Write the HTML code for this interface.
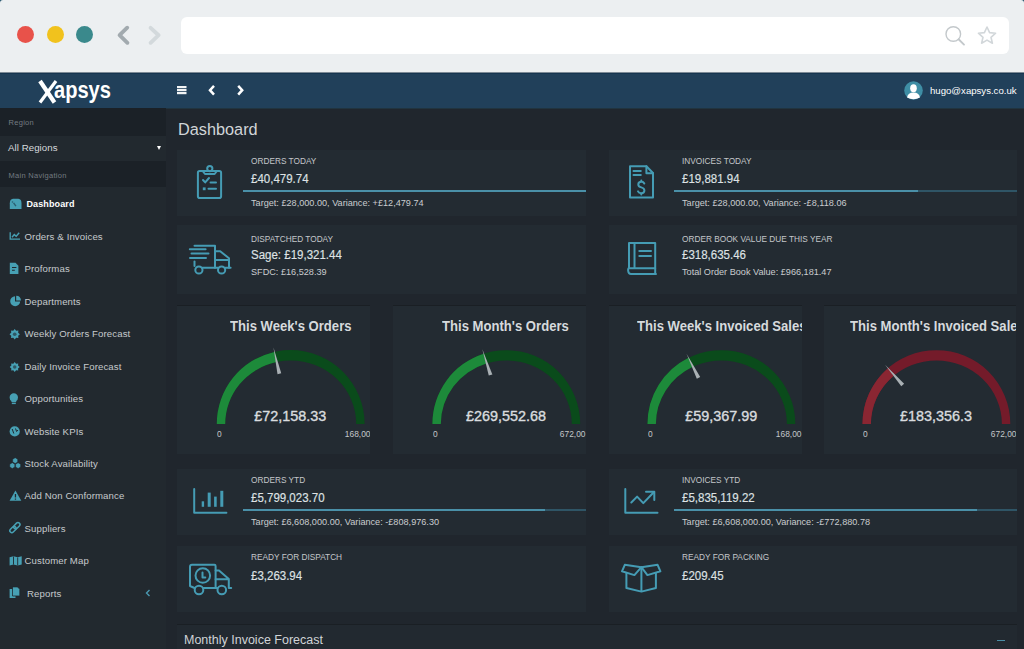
<!DOCTYPE html><html><head><meta charset="utf-8"><style>
*{margin:0;padding:0;box-sizing:border-box}
html,body{width:1024px;height:649px;overflow:hidden;background:#20262d;font-family:"Liberation Sans",sans-serif}
.a{position:absolute}
#chrome{left:0;top:0;width:1024px;height:72px;background:#eceff1;border-radius:3px 3px 0 0}
.dot{width:17px;height:17px;border-radius:50%;top:25.8px}
#url{left:181px;top:16.5px;width:828px;height:37px;background:#fff;border-radius:6px}
#nav{left:0;top:72px;width:1024px;height:37px;background:linear-gradient(to bottom,#7d8a95 0,#7d8a95 1px,#163550 1px,#163550 2px,#21405a 2px,#21405a 36px,#21343f 36px)}
#side{left:0;top:108px;width:166px;height:541px;background:#22292f}
.sh{left:0;width:166px;background:#1b2127}
.sht{left:8.5px;font-size:7.5px;color:#737b81;letter-spacing:0.3px;white-space:nowrap}
.mt{font-size:9.6px;color:#c6cacd;white-space:nowrap;line-height:12px;letter-spacing:0.12px}
.card{background:#232b32}
.lab{font-size:9px;color:#c3c7ca;white-space:nowrap;line-height:10px;transform:scaleX(0.92);transform-origin:0 0}
.val{font-size:12.5px;color:#dfe2e4;font-weight:normal;-webkit-text-stroke:0.15px #dfe2e4;white-space:nowrap;line-height:14px;transform:scaleX(0.92);transform-origin:0 0}
.sub{font-size:9.15px;color:#cacdd0;white-space:nowrap;line-height:10px}
.bar{height:2.3px;background:#4a90a8}
.gc{background:#232b32;overflow:hidden}
.gt{font-size:14.8px;font-weight:bold;color:#d6dadd;white-space:nowrap;line-height:15px;transform:scaleX(0.885);transform-origin:0 0}
.gv{font-size:14.4px;color:#d9dcdf;white-space:nowrap;line-height:16px;-webkit-text-stroke:0.35px #d9dcdf}
.gl{font-size:9.3px;color:#c3c7ca;white-space:nowrap;line-height:10px;transform:scaleX(0.9)}
</style></head><body>
<div class="a" style="left:0;top:0;width:1024px;height:6px;background:#1e5068"></div>
<div id="chrome" class="a">
  <div class="a dot" style="left:17px;background:#e8524a"></div>
  <div class="a dot" style="left:47px;background:#f1c21d"></div>
  <div class="a dot" style="left:76px;background:#3a898c"></div>
  <svg class="a" style="left:115px;top:22px" width="50" height="26" viewBox="0 0 50 26">
    <path d="M12.2 5.7 L4.6 13.2 L12.4 20.8" fill="none" stroke="#a2aaaf" stroke-width="3.9" stroke-linecap="round" stroke-linejoin="round"/>
    <path d="M35.6 5.9 L43.6 13.2 L35.6 20.8" fill="none" stroke="#d3d9dc" stroke-width="3.9" stroke-linecap="round" stroke-linejoin="round"/>
  </svg>
  <div id="url" class="a"></div>
  <svg class="a" style="left:940px;top:20px" width="60" height="30" viewBox="0 0 60 30">
    <circle cx="13.3" cy="14" r="7.3" fill="none" stroke="#c3c8cb" stroke-width="1.4"/>
    <path d="M18.6 19.3 L24 24.6" stroke="#c3c8cb" stroke-width="1.9" stroke-linecap="round"/>
    <path d="M47 7 L49.6 12.6 L55.6 13.2 L51 17.3 L52.4 23.2 L47 20.1 L41.6 23.2 L43 17.3 L38.4 13.2 L44.4 12.6 Z" fill="none" stroke="#d2d7da" stroke-width="1.6" stroke-linejoin="round"/>
  </svg>
</div>
<div id="nav" class="a">
  <svg class="a" style="left:36px;top:7px" width="24" height="25" viewBox="0 0 24 25"><path d="M4 2 L18.5 23.5" stroke="#fff" stroke-width="4.2" stroke-linecap="butt"/><path d="M20 2 L4 23.5" stroke="#fff" stroke-width="3.2"/></svg>
  <div class="a" style="left:53.5px;top:6.3px;font-size:24.5px;line-height:24.5px;color:#fff;font-weight:bold;white-space:nowrap;transform:scaleX(0.82);transform-origin:0 0">apsys</div>
  <svg class="a" style="left:176px;top:12px" width="72" height="14" viewBox="0 0 72 14">
    <rect x="1" y="2" width="9.5" height="2.2" fill="#f2f4f5"/><rect x="1" y="5" width="9.5" height="2.2" fill="#f2f4f5"/><rect x="1" y="8" width="9.5" height="2.2" fill="#f2f4f5"/>
    <path d="M38 1.8 L34 6.2 L38 10.6" fill="none" stroke="#fff" stroke-width="2.5"/>
    <path d="M62.2 1.8 L66.2 6.2 L62.2 10.6" fill="none" stroke="#fff" stroke-width="2.5"/>
  </svg>
  <svg class="a" style="left:903.5px;top:9px" width="19" height="19" viewBox="0 0 19 19">
    <circle cx="9.5" cy="9.5" r="9.3" fill="#3f8ea5"/>
    <ellipse cx="9.5" cy="7.2" rx="3.3" ry="4" fill="#fff"/>
    <path d="M3 16.5 Q4 11.5 9.5 11.5 Q15 11.5 16 16.5 Q9.5 20 3 16.5Z" fill="#fff"/>
  </svg>
  <div class="a" style="left:930px;top:13px;font-size:9.6px;color:#fff;white-space:nowrap">hugo@xapsys.co.uk</div>
</div>
<div id="side" class="a">
  <div class="a sh" style="top:0;height:28px"></div>
  <div class="a sht" style="top:10px">Region</div>
  <div class="a" style="left:8px;top:34.3px;font-size:9.7px;color:#d6dadd;white-space:nowrap;letter-spacing:0.05px">All Regions</div>
  <div class="a" style="left:157px;top:38px;width:0;height:0;border-left:2.2px solid transparent;border-right:2.2px solid transparent;border-top:4px solid #fff"></div>
  <div class="a sh" style="top:53px;height:26px"></div>
  <div class="a sht" style="top:63px">Main Navigation</div>
</div>
<div class="a mt" style="left:26.5px;top:198.2px;color:#fff;font-weight:bold;font-size:9px">Dashboard</div>
<div class="a mt" style="left:24.5px;top:230.7px;">Orders &amp; Invoices</div>
<div class="a mt" style="left:24.5px;top:263.2px;">Proformas</div>
<div class="a mt" style="left:24.5px;top:295.5px;">Departments</div>
<div class="a mt" style="left:24.5px;top:328.2px;">Weekly Orders Forecast</div>
<div class="a mt" style="left:24.5px;top:360.7px;">Daily Invoice Forecast</div>
<div class="a mt" style="left:24.5px;top:393.2px;">Opportunities</div>
<div class="a mt" style="left:24.5px;top:425.5px;">Website KPIs</div>
<div class="a mt" style="left:24.5px;top:458.0px;">Stock Availability</div>
<div class="a mt" style="left:24.5px;top:490.2px;">Add Non Conformance</div>
<div class="a mt" style="left:24.5px;top:522.7px;">Suppliers</div>
<div class="a mt" style="left:24.5px;top:555.2px;">Customer Map</div>
<div class="a mt" style="left:27px;top:587.5px;">Reports</div>
<svg class="a" style="left:0;top:0" width="166" height="649" viewBox="0 0 166 649"><path d="M9.8 208.9 L9.8 203.2 Q9.8 199 13 198.7 L18.4 198.7 Q21.5 199 21.5 203.2 L21.5 208.9 Z" fill="#47a0b4"/><path d="M15.9 206.2 L13.6 202.8" stroke="#2a5f70" stroke-width="1.4"/><circle cx="12.5" cy="202" r="0.8" fill="#2a5f70"/><path d="M10.2 232.2 L10.2 239.2 L20 239.2" fill="none" stroke="#47a0b4" stroke-width="1.3"/><path d="M12 237.2 L14.3 234.6 L16.2 236.2 L19.2 232.8" fill="none" stroke="#47a0b4" stroke-width="1.4"/><path d="M9.8 262.8 L15.5 262.8 L18.4 265.8 L18.4 274 L9.8 274 Z" fill="#47a0b4"/><path d="M12 267.5 L16.4 267.5 M12 270.2 L14.8 270.2" stroke="#20272e" stroke-width="1.1"/><path d="M15 296.2 A5 5 0 1 0 20.2 301.4 L15 301.4 Z" fill="#47a0b4"/><path d="M16.2 295.8 A5 5 0 0 1 21 300.4 L16.2 300.4 Z" fill="#47a0b4"/><polygon points="19.90,334.30 18.16,335.73 18.38,337.98 16.13,337.76 14.70,339.50 13.27,337.76 11.02,337.98 11.24,335.73 9.50,334.30 11.24,332.87 11.02,330.62 13.27,330.84 14.70,329.10 16.13,330.84 18.38,330.62 18.16,332.87" fill="#47a0b4"/><circle cx="14.7" cy="334.3" r="1.82" fill="#20272e" opacity="0.6"/><polygon points="19.70,367.00 18.03,368.38 18.24,370.54 16.08,370.33 14.70,372.00 13.32,370.33 11.16,370.54 11.37,368.38 9.70,367.00 11.37,365.62 11.16,363.46 13.32,363.67 14.70,362.00 16.08,363.67 18.24,363.46 18.03,365.62" fill="#47a0b4"/><circle cx="14.7" cy="367" r="1.75" fill="#20272e" opacity="0.6"/><path d="M13.8 393.2 A4.2 4.2 0 0 1 18 397.4 Q18 399.6 16.2 401 L16.2 402 L11.4 402 L11.4 401 Q9.6 399.6 9.6 397.4 A4.2 4.2 0 0 1 13.8 393.2 Z" fill="#47a0b4"/><rect x="11.8" y="402.6" width="4" height="1.5" fill="#47a0b4"/><circle cx="14.7" cy="431.4" r="5.1" fill="#47a0b4"/><path d="M12.2 429 L13.8 433.5 M15.5 428.5 L16.6 431.5 L18 430" fill="none" stroke="#20272e" stroke-width="1"/><polygon points="17.71,462.05 15.20,463.50 12.69,462.05 12.69,459.15 15.20,457.70 17.71,459.15" fill="#47a0b4" stroke="#20272e" stroke-width="0.5"/><polygon points="14.81,467.05 12.30,468.50 9.79,467.05 9.79,464.15 12.30,462.70 14.81,464.15" fill="#47a0b4" stroke="#20272e" stroke-width="0.5"/><polygon points="20.61,467.05 18.10,468.50 15.59,467.05 15.59,464.15 18.10,462.70 20.61,464.15" fill="#47a0b4" stroke="#20272e" stroke-width="0.5"/><path d="M15.45 490.6 L21.3 500.8 L9.6 500.8 Z" fill="#47a0b4"/><path d="M15.45 494 L15.45 497.5" stroke="#20272e" stroke-width="1.3"/><rect x="14.8" y="498.5" width="1.3" height="1.2" fill="#20272e"/><g transform="rotate(-45 14.9 527.6)"><rect x="8.6" y="525.6" width="7.2" height="4" rx="2" fill="none" stroke="#47a0b4" stroke-width="1.5"/><rect x="14" y="525.6" width="7.2" height="4" rx="2" fill="none" stroke="#47a0b4" stroke-width="1.5"/></g><path d="M9.6 557.3 L13.5 556.3 L17.7 557.3 L21.7 556.3 L21.7 564.6 L17.7 565.6 L13.5 564.6 L9.6 565.6 Z" fill="#47a0b4"/><path d="M13.5 556.5 L13.5 564.5 M17.7 557.5 L17.7 565.5" stroke="#20272e" stroke-width="0.9"/><path d="M9.6 589 L15.5 589 L15.5 598 L9.6 598 Z" fill="#47a0b4"/><path d="M12.5 586.9 L17.5 586.9 L19.8 589.2 L19.8 596 L12.5 596 Z" fill="#47a0b4" stroke="#20272e" stroke-width="0.8"/></svg>
<svg class="a" style="left:145px;top:589px" width="6" height="8" viewBox="0 0 6 8"><path d="M4.5 1 L1.5 4 L4.5 7" fill="none" stroke="#4a98b0" stroke-width="1.4"/></svg>
<div class="a" style="left:178px;top:120px;font-size:16.3px;color:#d1d5d8;white-space:nowrap">Dashboard</div>
<div class="a card" style="left:176.5px;top:149.5px;width:409.5px;height:66.2px"></div>
<div class="a card" style="left:608.5px;top:149.5px;width:408.3px;height:66.2px"></div>
<div class="a card" style="left:176.5px;top:225.2px;width:409.5px;height:68.8px"></div>
<div class="a card" style="left:608.5px;top:225.2px;width:408.3px;height:68.8px"></div>
<div class="a card" style="left:176.5px;top:469.3px;width:409.5px;height:65.8px"></div>
<div class="a card" style="left:608.5px;top:469.3px;width:408.3px;height:65.8px"></div>
<div class="a card" style="left:176.5px;top:545.5px;width:409.5px;height:66.5px"></div>
<div class="a card" style="left:608.5px;top:545.5px;width:408.3px;height:66.5px"></div>
<div class="a lab" style="left:251px;top:156px">ORDERS TODAY</div>
<div class="a val" style="left:251px;top:171.5px">£40,479.74</div>
<div class="a sub" style="left:251px;top:197.5px">Target: £28,000.00, Variance: +£12,479.74</div>
<div class="a bar" style="left:243px;top:190px;width:343px"></div>
<div class="a lab" style="left:682px;top:156px">INVOICES TODAY</div>
<div class="a val" style="left:682px;top:171.5px">£19,881.94</div>
<div class="a sub" style="left:682px;top:197.5px">Target: £28,000.00, Variance: -£8,118.06</div>
<div class="a bar" style="left:674px;top:190px;width:243.5px"></div>
<div class="a bar" style="left:917.5px;top:190px;width:99px;background:#2f5566"></div>
<div class="a lab" style="left:251px;top:233.5px">DISPATCHED TODAY</div>
<div class="a val" style="left:251px;top:248px">Sage: £19,321.44</div>
<div class="a sub" style="left:251px;top:266.5px">SFDC: £16,528.39</div>
<div class="a lab" style="left:682px;top:233.5px">ORDER BOOK VALUE DUE THIS YEAR</div>
<div class="a val" style="left:682px;top:248px">£318,635.46</div>
<div class="a sub" style="left:682px;top:266.5px">Total Order Book Value: £966,181.47</div>
<div class="a lab" style="left:251px;top:475px">ORDERS YTD</div>
<div class="a val" style="left:251px;top:491px">£5,799,023.70</div>
<div class="a sub" style="left:251px;top:517px">Target: £6,608,000.00, Variance: -£808,976.30</div>
<div class="a bar" style="left:243px;top:509px;width:302px"></div>
<div class="a bar" style="left:545px;top:509px;width:41px;background:#2f5566"></div>
<div class="a lab" style="left:682px;top:475px">INVOICES YTD</div>
<div class="a val" style="left:682px;top:491px">£5,835,119.22</div>
<div class="a sub" style="left:682px;top:517px">Target: £6,608,000.00, Variance: -£772,880.78</div>
<div class="a bar" style="left:674px;top:509px;width:303px"></div>
<div class="a bar" style="left:977px;top:509px;width:40px;background:#2f5566"></div>
<div class="a lab" style="left:251px;top:552px">READY FOR DISPATCH</div>
<div class="a val" style="left:251px;top:568.5px">£3,263.94</div>
<div class="a lab" style="left:682px;top:552px">READY FOR PACKING</div>
<div class="a val" style="left:682px;top:568.5px">£209.45</div>
<svg class="a" style="left:0;top:0" width="1024" height="649" viewBox="0 0 1024 649"><rect x="197.9" y="171" width="23.2" height="27" rx="1.8" fill="none" stroke="#459cb4" stroke-width="2" stroke-linejoin="round" stroke-linecap="round"/><path d="M203 171.5 L205 174 L214.6 174 L216.6 171.5" fill="none" stroke="#459cb4" stroke-width="2" stroke-linejoin="round" stroke-linecap="round"/><circle cx="209.8" cy="168.6" r="2.6" fill="none" stroke="#459cb4" stroke-width="2" stroke-linejoin="round" stroke-linecap="round"/><path d="M203 180 L205.2 182.4 L209 178" fill="none" stroke="#459cb4" stroke-width="2" stroke-linejoin="round" stroke-linecap="round" stroke-width="1.6"/><path d="M210.5 182.6 L216 182.6" fill="none" stroke="#459cb4" stroke-width="2" stroke-linejoin="round" stroke-linecap="round" stroke-width="1.6"/><rect x="202.8" y="187.4" width="2.8" height="2.8" fill="#459cb4"/><path d="M208.5 188.7 L216 188.7" fill="none" stroke="#459cb4" stroke-width="2" stroke-linejoin="round" stroke-linecap="round" stroke-width="2.4"/><path d="M630 166.2 L646.4 166.2 L653 173 L653 197.5 L630 197.5 Z" fill="none" stroke="#459cb4" stroke-width="2" stroke-linejoin="round" stroke-linecap="round"/><path d="M646.4 166.2 L646.4 173.2 L653 173.2" fill="none" stroke="#459cb4" stroke-width="2" stroke-linejoin="round" stroke-linecap="round"/><path d="M633.5 171 L640.8 171 M633.5 175 L640.8 175" fill="none" stroke="#459cb4" stroke-width="2" stroke-linejoin="round" stroke-linecap="round" stroke-width="1.8"/><path d="M644.3 183.5 Q643.5 181.8 641.3 181.8 Q638.3 181.8 638.3 184.4 Q638.3 186.6 641.3 187.4 Q644.4 188.2 644.4 190.6 Q644.4 193.2 641.3 193.2 Q638.8 193.2 638 191.4 M641.3 180.5 L641.3 181.8 M641.3 193.2 L641.3 194.6" fill="none" stroke="#459cb4" stroke-width="2" stroke-linejoin="round" stroke-linecap="round" stroke-width="1.6"/><path d="M194.5 245.8 L215 245.8 L215 267.8" fill="none" stroke="#459cb4" stroke-width="2" stroke-linejoin="round" stroke-linecap="round"/><path d="M189.8 249.2 L205.6 249.2 M191.5 253.6 L208.5 253.6 M190 258 L206 258" fill="none" stroke="#459cb4" stroke-width="2" stroke-linejoin="round" stroke-linecap="round"/><path d="M194.5 261.4 L194.5 266" fill="none" stroke="#459cb4" stroke-width="2" stroke-linejoin="round" stroke-linecap="round"/><path d="M202.5 267.8 L218 267.8 M225.3 267.8 L230.6 267.8" fill="none" stroke="#459cb4" stroke-width="2" stroke-linejoin="round" stroke-linecap="round"/><path d="M215 251.2 L220.2 251.2 L229 258.3 L229 267.8 M215 260 L229 260" fill="none" stroke="#459cb4" stroke-width="2" stroke-linejoin="round" stroke-linecap="round"/><circle cx="198.9" cy="270" r="3.6" fill="none" stroke="#459cb4" stroke-width="2" stroke-linejoin="round" stroke-linecap="round"/><circle cx="221.6" cy="270" r="3.6" fill="none" stroke="#459cb4" stroke-width="2" stroke-linejoin="round" stroke-linecap="round"/><path d="M629 243 L655.2 243 L655.2 268.2 L629 268.2 Z" fill="none" stroke="#459cb4" stroke-width="2" stroke-linejoin="round" stroke-linecap="round"/><path d="M634.5 243 L634.5 268" fill="none" stroke="#459cb4" stroke-width="2" stroke-linejoin="round" stroke-linecap="round"/><path d="M629 268.2 Q627.8 268.2 628.2 271 Q628.5 274 631 274 L656 274 M655.2 268.2 L655.2 274" fill="none" stroke="#459cb4" stroke-width="2" stroke-linejoin="round" stroke-linecap="round"/><path d="M639.3 251 L651 251 M639.3 256 L651 256" fill="none" stroke="#459cb4" stroke-width="2" stroke-linejoin="round" stroke-linecap="round"/><path d="M194.2 489 L194.2 512.7 L226.4 512.7" fill="none" stroke="#459cb4" stroke-width="2" stroke-linejoin="round" stroke-linecap="round" stroke-width="2.2" stroke-linecap="butt"/><rect x="201.70000000000002" y="501.3" width="2.4" height="5.5" fill="#459cb4"/><rect x="207.7" y="492.6" width="3" height="14.199999999999989" fill="#459cb4"/><rect x="214.1" y="496.6" width="2.6" height="10.199999999999989" fill="#459cb4"/><rect x="220.3" y="490.8" width="3" height="16.0" fill="#459cb4"/><path d="M625.3 489 L625.3 512.7 L657.5 512.7" fill="none" stroke="#459cb4" stroke-width="2" stroke-linejoin="round" stroke-linecap="round" stroke-width="2.2" stroke-linecap="butt"/><path d="M631.3 502.5 L637.1 496.6 L643.3 503.1 L653.5 492.5" fill="none" stroke="#459cb4" stroke-width="2" stroke-linejoin="round" stroke-linecap="round"/><path d="M646 491.8 L654.3 491.8 L654.3 500" fill="none" stroke="#459cb4" stroke-width="2" stroke-linejoin="round" stroke-linecap="round"/><path d="M215.6 588 L215.6 566 Q215.6 564.8 214.4 564.8 L192 564.8 Q190 564.8 190 566.8 L190 586 L194.5 588" fill="none" stroke="#459cb4" stroke-width="2" stroke-linejoin="round" stroke-linecap="round"/><circle cx="202.8" cy="575.5" r="7.3" fill="none" stroke="#459cb4" stroke-width="2" stroke-linejoin="round" stroke-linecap="round"/><path d="M202.5 572.5 L202.5 577.5 L205.3 577.5" fill="none" stroke="#459cb4" stroke-width="2" stroke-linejoin="round" stroke-linecap="round" stroke-width="1.6"/><path d="M215.6 570.6 L219 570.6 L228.8 578.9 L228.8 588 L231.2 588 M215.6 579.3 L228.8 579.3 M203.5 588 L217.3 588" fill="none" stroke="#459cb4" stroke-width="2" stroke-linejoin="round" stroke-linecap="round"/><circle cx="199" cy="590" r="4.3" fill="none" stroke="#459cb4" stroke-width="2" stroke-linejoin="round" stroke-linecap="round"/><circle cx="221.8" cy="590" r="4.3" fill="none" stroke="#459cb4" stroke-width="2" stroke-linejoin="round" stroke-linecap="round"/><path d="M641.4 567.2 L641.4 591.5 M626.4 573.5 L626.4 588 L641.4 591.6 L655.9 588 L655.9 573.5" fill="none" stroke="#459cb4" stroke-width="2" stroke-linejoin="round" stroke-linecap="round"/><path d="M641.4 567.2 L624.8 564.8 L622 571.3 L634.4 575.1 Z" fill="none" stroke="#459cb4" stroke-width="2" stroke-linejoin="round" stroke-linecap="round"/><path d="M641.4 567.2 L657.6 564.8 L660.4 571.3 L647.4 575.1 Z" fill="none" stroke="#459cb4" stroke-width="2" stroke-linejoin="round" stroke-linecap="round"/></svg>
<div class="a gc" style="left:176.5px;top:305px;width:193.9px;height:149px;border-top:1px solid #1a1f24">
<div class="a gt" style="left:53.19999999999999px;top:13px">This Week&#39;s Orders</div>
<svg class="a" style="left:0;top:0" width="193.9" height="149" viewBox="0 0 193.9 149">
<path d="M39.80 118.00 A73.9 73.9 0 0 1 187.60 118.00 L179.20 118.00 A65.5 63.5 0 0 0 48.20 118.00 Z" fill="#0a4b1b"/>
<path d="M39.80 118.00 A73.9 73.9 0 0 1 97.47 45.90 L99.31 56.05 A65.5 63.5 0 0 0 48.20 118.00 Z" fill="#1d8a3a"/>
<path d="M96.48 41.51 L100.54 68.17 L104.24 67.34 Z" fill="#a9b0b4"/>
</svg>
<div class="a gv" style="left:0;width:227.39999999999998px;text-align:center;top:101.7px">£72,158.33</div>
<div class="a gl" style="left:40.59999999999998px;top:123.3px;transform-origin:0 0">0</div>
<div class="a gl" style="right:0;top:123.3px;transform-origin:100% 0">168,00</div>
</div>
<div class="a gc" style="left:392.7px;top:305px;width:193px;height:149px;border-top:1px solid #1a1f24">
<div class="a gt" style="left:49.30000000000001px;top:13px">This Month&#39;s Orders</div>
<svg class="a" style="left:0;top:0" width="193" height="149" viewBox="0 0 193 149">
<path d="M39.40 118.00 A73.9 73.9 0 0 1 187.20 118.00 L178.80 118.00 A65.5 63.5 0 0 0 47.80 118.00 Z" fill="#0a4b1b"/>
<path d="M39.40 118.00 A73.9 73.9 0 0 1 90.71 47.64 L93.28 57.54 A65.5 63.5 0 0 0 47.80 118.00 Z" fill="#1d8a3a"/>
<path d="M89.34 43.35 L95.75 69.55 L99.37 68.38 Z" fill="#a9b0b4"/>
</svg>
<div class="a gv" style="left:0;width:226.60000000000002px;text-align:center;top:101.7px">£269,552.68</div>
<div class="a gl" style="left:40.2px;top:123.3px;transform-origin:0 0">0</div>
<div class="a gl" style="right:0;top:123.3px;transform-origin:100% 0">672,00</div>
</div>
<div class="a gc" style="left:608.9px;top:305px;width:192.8px;height:149px;border-top:1px solid #1a1f24">
<div class="a gt" style="left:27.700000000000045px;top:13px">This Week&#39;s Invoiced Sales</div>
<svg class="a" style="left:0;top:0" width="192.8" height="149" viewBox="0 0 192.8 149">
<path d="M38.50 118.00 A73.9 73.9 0 0 1 186.30 118.00 L177.90 118.00 A65.5 63.5 0 0 0 46.90 118.00 Z" fill="#0a4b1b"/>
<path d="M38.50 118.00 A73.9 73.9 0 0 1 79.55 51.80 L83.29 61.12 A65.5 63.5 0 0 0 46.90 118.00 Z" fill="#1d8a3a"/>
<path d="M77.55 47.77 L87.81 72.71 L91.21 71.02 Z" fill="#a9b0b4"/>
</svg>
<div class="a gv" style="left:0;width:224.79999999999995px;text-align:center;top:101.7px">£59,367.99</div>
<div class="a gl" style="left:39.29999999999997px;top:123.3px;transform-origin:0 0">0</div>
<div class="a gl" style="right:0;top:123.3px;transform-origin:100% 0">168,00</div>
</div>
<div class="a gc" style="left:823.6px;top:305px;width:192.4px;height:149px;border-top:1px solid #1a1f24">
<div class="a gt" style="left:26.199999999999932px;top:13px">This Month&#39;s Invoiced Sales</div>
<svg class="a" style="left:0;top:0" width="192.4" height="149" viewBox="0 0 192.4 149">
<path d="M38.50 118.00 A73.9 73.9 0 0 1 186.30 118.00 L177.90 118.00 A65.5 63.5 0 0 0 46.90 118.00 Z" fill="#741b2a"/>
<path d="M38.50 118.00 A73.9 73.9 0 0 1 64.03 62.13 L69.53 69.99 A65.5 63.5 0 0 0 46.90 118.00 Z" fill="#8a2632"/>
<path d="M61.08 58.73 L77.25 80.31 L80.13 77.82 Z" fill="#a9b0b4"/>
</svg>
<div class="a gv" style="left:0;width:224.79999999999995px;text-align:center;top:101.7px">£183,356.3</div>
<div class="a gl" style="left:39.29999999999997px;top:123.3px;transform-origin:0 0">0</div>
<div class="a gl" style="right:0;top:123.3px;transform-origin:100% 0">672,00</div>
</div>
<div class="a" style="left:176.5px;top:624px;width:840px;height:25px;background:#222930;border-top:1px solid #1a1f24"></div>
<div class="a" style="left:184px;top:632.5px;font-size:12.5px;color:#d0d4d7;white-space:nowrap">Monthly Invoice Forecast</div>
<div class="a" style="left:997px;top:639.5px;width:8px;height:1.5px;background:#4a8ea6"></div>
</body></html>
